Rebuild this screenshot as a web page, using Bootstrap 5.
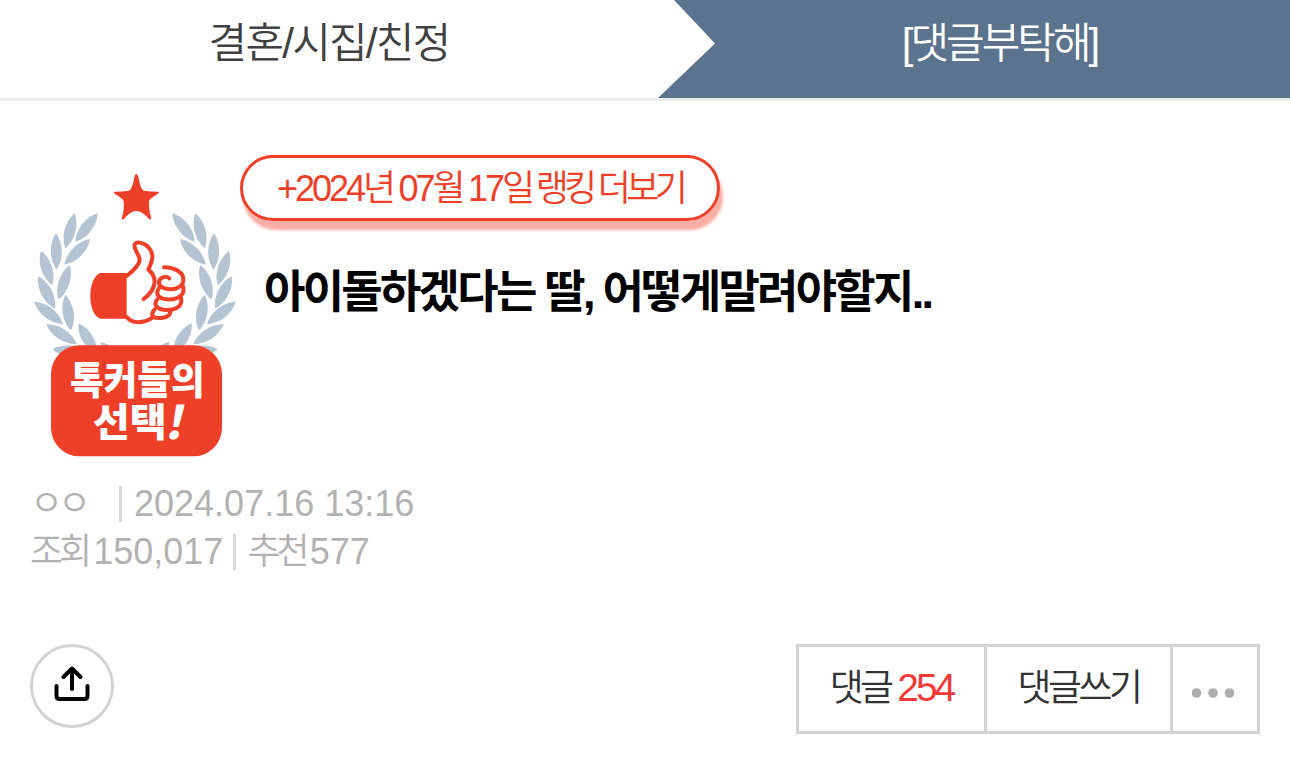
<!DOCTYPE html>
<html lang="ko">
<head>
  <meta charset="UTF-8">
  <meta name="viewport" content="width=device-width, initial-scale=1.0">
  <title>아이돌하겠다는 딸, 어떻게말려야할지..</title>
  <link rel="stylesheet" href="https://cdn.jsdelivr.net/npm/bootstrap@5.3.2/dist/css/bootstrap.min.css">
  <style>
    body { font-family: "Liberation Sans", "Noto Sans CJK KR", sans-serif; font-weight: 350; color: #333; background: #fff; overflow: hidden; }
    .topbar { height: 101px; border-bottom: 3px solid #ebebeb; background: #5c738d; font-size: 42px; letter-spacing: -3px; line-height: 88px; }
    .topbar-category { width: 715px; padding-right: 57px; color: #404040; background: #fff; letter-spacing: -1.8px; clip-path: polygon(0 0, 674px 0, 715px 43.5px, 658px 98px, 0 98px); }
    .topbar-tag { padding-right: 6px; }
    .post-head { height: 379px; padding-left: 20px; }
    .emblem { width: 220px; height: 310px; margin-top: 59px; }
    .rank-link { width: 480px; height: 66px; margin-top: 54px; border: 3px solid #ee3f29; border-radius: 33px; box-shadow: 3px 9px 3px rgba(238, 63, 41, .42); color: #ee3f29; font-size: 36px; letter-spacing: -3px; line-height: 61px; }
    .ko { letter-spacing: -4.7px; }
    .post-title { margin: 38px 0 0 24px; color: #000; font-size: 45px; font-weight: 700; letter-spacing: -2.75px; line-height: 68px; }
    .post-meta { height: 164px; padding-left: 30px; color: #b2b2b2; font-size: 36px; line-height: 46px; }
    .post-meta > div { height: 48px; }
    .tight { letter-spacing: -4px; }
    .writer { width: 89px; letter-spacing: -5px; }
    .bar { width: 3px; height: 36px; background: #d8d8d8; }
    .date { margin-left: 12px; }
    .views { margin: 0 10px 0 5px; }
    .likes-label { margin-left: 11px; }
    .likes { margin-left: 4px; }
    .actions { padding: 0 30px; }
    .share-btn { width: 84px; height: 84px; border: 3px solid #d3d3d3; }
    .share-btn svg { margin-bottom: 4px; }
    .reply-group { height: 90px; border: 3px solid #d3d3d3; font-size: 37px; letter-spacing: -3.6px; line-height: 82px; }
    .reply-group > * + * { border-left: 3px solid #d3d3d3; }
    .reply-count { width: 185px; }
    .reply-write { width: 186px; line-height: 84px; }
    .reply-more { width: 87px; padding: 8px 2px 0 0; }
    .count-num { color: #f23a3a; font-size: 39px; letter-spacing: -3px; }
  </style>
</head>
<body>
  <header class="topbar d-flex text-center">
    <div class="topbar-category">결혼/시집/친정</div>
    <div class="topbar-tag flex-fill text-white">[댓글부탁해]</div>
  </header>

  <main>
    <section class="post-head d-flex">
      <!-- Laurel emblem -->
      <svg class="emblem flex-shrink-0" viewBox="0 0 660 930">
        <defs>
          <path id="leaf" d="M0 0C30-22 78-22 109 0C78 22 30 22 0 0Z"/>
          <g id="branch">
            <use href="#leaf" transform="translate(233 160) rotate(128)"/>
            <use href="#leaf" transform="translate(164 160) rotate(105)"/>
            <use href="#leaf" transform="translate(108 220) rotate(89)"/>
            <use href="#leaf" transform="translate(210 237) rotate(135)"/>
            <use href="#leaf" transform="translate(63 273) rotate(72)"/>
            <use href="#leaf" transform="translate(149 315) rotate(108)"/>
            <use href="#leaf" transform="translate(55 349) rotate(63)"/>
            <use href="#leaf" transform="translate(136 404) rotate(81)"/>
            <use href="#leaf" transform="translate(43 425) rotate(38)"/>
            <use href="#leaf" transform="translate(79 493) rotate(33)"/>
            <use href="#leaf" transform="translate(175 490) rotate(59)"/>
            <use href="#leaf" transform="translate(97 568) rotate(6)"/>
            <use href="#leaf" transform="translate(242 545) rotate(50)"/>
          </g>
        </defs>
        <g fill="#b5c4d3">
          <use href="#branch"/>
          <use href="#branch" transform="translate(690 0) scale(-1 1)"/>
        </g>
        <path fill="#ee3f29" d="M349 42Q353 42 355 50Q362 90 372 92Q390 95 415 95Q419 98 413 102Q386 118 387 125Q385 145 394 175Q393 180 387 177Q366 153 349 153Q332 153 312 177Q306 181 305 175Q314 145 311 125Q312 118 285 102Q279 98 284 95Q308 95 327 92Q337 88 344 48Q346 42 349 42Z"/>
        <path fill="#ee3f29" d="M240 339H320V476H240C201 460 201 357 240 339Z"/>
        <g transform="translate(195 225)" fill="none" stroke="#ee3f29" stroke-width="12" stroke-linecap="round" stroke-linejoin="round">
          <path d="M125 123C145 107 163 90 164 75C165 60 144 42 149 28C154 18 180 22 193 40C212 65 197 85 190 104C216 125 218 160 176 192"/>
          <path d="M125 246C140 265 172 267 201 249"/>
          <path d="M237 97C270 98 298 112 295 137C293 160 262 167 240 160C222 155 217 142 226 132C234 124 247 122 253 130"/>
          <path d="M223 158C208 178 222 191 245 193C279 195 302 180 294 154"/>
          <path d="M217 193C202 212 220 225 245 225C279 225 293 210 288 188"/>
          <path d="M209 223C192 243 208 251 230 249C248 247 256 241 256 229"/>
        </g>
        <rect x="93" y="556" width="513" height="333" rx="86" fill="#ee3f29"/>
        <g fill="#fff" font-family="'Noto Sans CJK KR', sans-serif" font-weight="900" font-size="116">
          <text x="150" y="701" textLength="404" lengthAdjust="spacingAndGlyphs">톡커들의</text>
          <text x="218" y="828" textLength="222" lengthAdjust="spacingAndGlyphs">선택</text>
          <text transform="translate(433 837) skewX(-12)" font-size="136">!</text>
        </g>
      </svg>
      <div>
        <a href="#" class="rank-link d-block text-center text-decoration-none">+2024<span class="ko">년</span> 07<span class="ko">월</span> 17<span class="ko">일 랭킹 더보기</span></a>
        <h1 class="post-title">아이돌하겠다는 딸, 어떻게말려야할지..</h1>
      </div>
    </section>

    <section class="post-meta">
      <div class="d-flex align-items-center">
        <span class="writer">ㅇㅇ</span><span class="bar"></span><span class="date">2024.07.16 13:16</span>
      </div>
      <div class="d-flex align-items-center">
        <span class="tight">조회</span><span class="views">150,017</span><span class="bar"></span><span class="tight likes-label">추천</span><span class="likes">577</span>
      </div>
    </section>

    <section class="actions d-flex justify-content-between">
      <button type="button" class="share-btn btn rounded-circle p-0 d-flex align-items-center justify-content-center" aria-label="공유">
        <svg width="36" height="36" viewBox="0 0 36 36" fill="none" stroke="#000" stroke-width="4" stroke-linecap="round" stroke-linejoin="round">
          <path d="M18 23V3M9.500 11L18 2.500L26.500 11M2.500 20V30Q2.500 33 5.500 33H30.500Q33.500 33 33.500 30V20"/>
        </svg>
      </button>
      <div class="reply-group d-flex text-center">
        <div class="reply-count">댓글 <span class="count-num">254</span></div>
        <div class="reply-write">댓글쓰기</div>
        <div class="reply-more d-flex align-items-center justify-content-center">
          <svg width="44" height="12" viewBox="0 0 44 12" fill="#adadad"><circle cx="4.500" cy="6" r="4.800"/><circle cx="21" cy="6" r="4.800"/><circle cx="37.500" cy="6" r="4.800"/></svg>
        </div>
      </div>
    </section>
  </main>
  <script src="https://cdn.jsdelivr.net/npm/bootstrap@5.3.2/dist/js/bootstrap.bundle.min.js"></script>
</body>
</html>
